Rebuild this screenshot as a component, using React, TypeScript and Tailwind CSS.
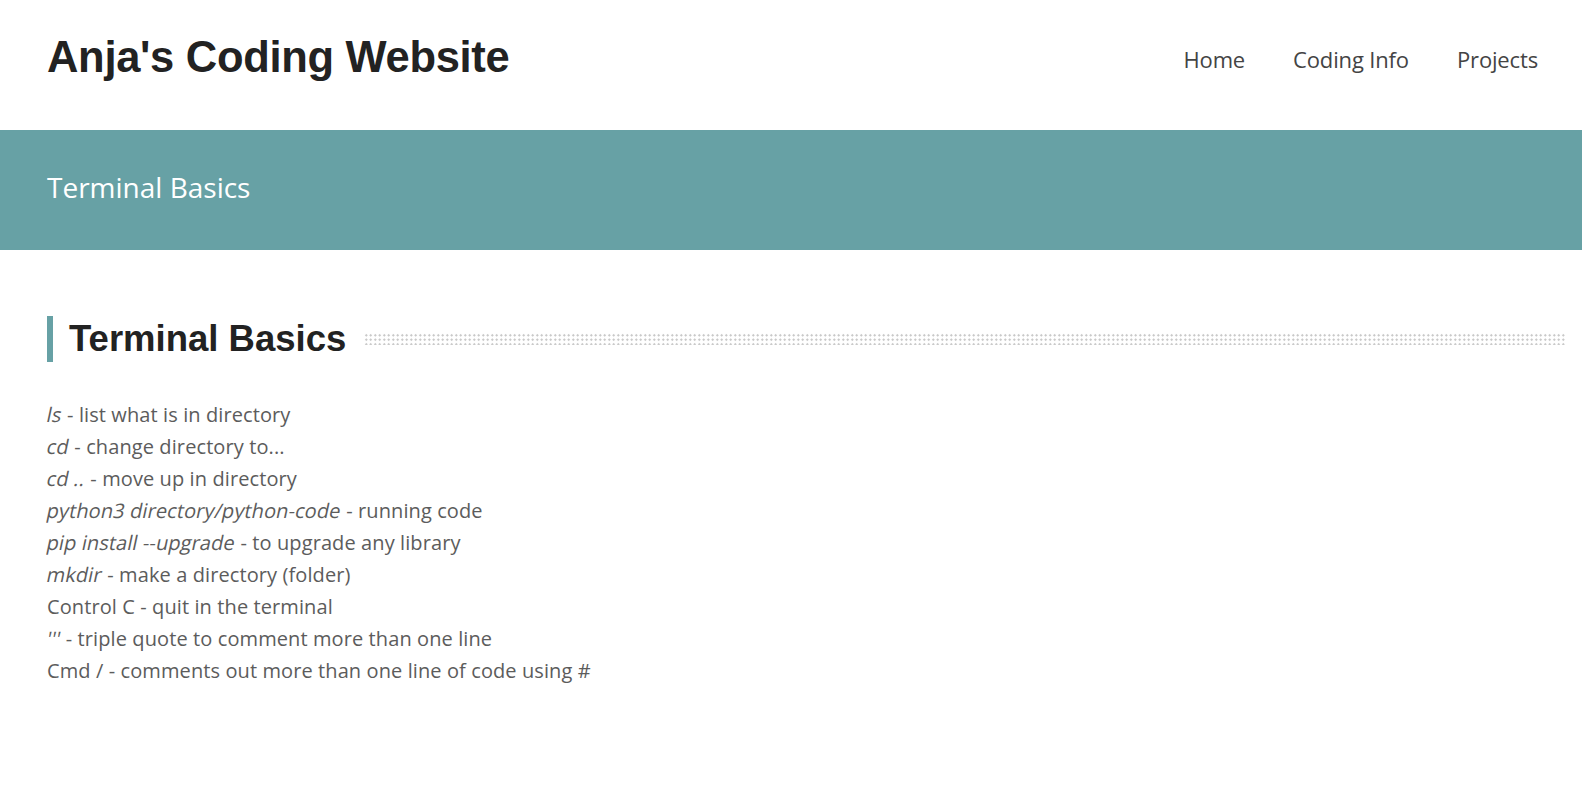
const items: [string, string][] = [
  ['ls', ' - list what is in directory'],
  ['cd', ' - change directory to...'],
  ['cd ..', ' - move up in directory'],
  ['python3 directory/python-code', ' - running code'],
  ['pip install --upgrade', ' - to upgrade any library'],
  ['mkdir', ' - make a directory (folder)'],
  ['', 'Control C - quit in the terminal'],
  ["'''", ' - triple quote to comment more than one line'],
  ['', 'Cmd / - comments out more than one line of code using #'],
];

export default function App() {
  return (
    <div className="min-h-screen bg-white font-['Open_Sans',sans-serif]">
      <header className="flex items-center justify-between h-[130px] pl-[47px] pr-[44px] pb-[11px]">
        <h1 className="font-['Liberation_Sans',Arial,sans-serif] font-bold text-[43.5px] text-[#222] tracking-[-0.3px] mb-[3px]">
          Anja's Coding Website
        </h1>
        <nav className="flex gap-[48px] text-[22px] text-[#444] tracking-[-0.15px]">
          <a href="#">Home</a>
          <a href="#">Coding Info</a>
          <a href="#">Projects</a>
        </nav>
      </header>

      <div className="h-[120px] bg-[#67a1a5] flex items-center pl-[47px] pb-[6px]">
        <h2 className="text-[28px] text-white">Terminal Basics</h2>
      </div>

      <main className="pl-[47px] pr-[16px] pt-[66px]">
        <div className="flex items-center">
          <div className="w-[6px] h-[46px] bg-[#67a1a5] mr-[16px]" />
          <h3 className="font-['Liberation_Sans',Arial,sans-serif] font-bold text-[36.5px] text-[#222] leading-none">
            Terminal Basics
          </h3>
          <div className="flex-1 ml-[18px] h-[12px] bg-[radial-gradient(#c4c4c4_0.9px,transparent_1px)] bg-[length:4.5px_4.5px]" />
        </div>

        <ul className="mt-[37px] text-[20px] leading-[32px] text-[#5c5c5c] tracking-[0.1px]">
          {items.map(([cmd, rest], i) => (
            <li key={i}>
              {cmd && <span className="inline-block -skew-x-[12deg]">{cmd}</span>}
              {rest}
            </li>
          ))}
        </ul>
      </main>
    </div>
  );
}
